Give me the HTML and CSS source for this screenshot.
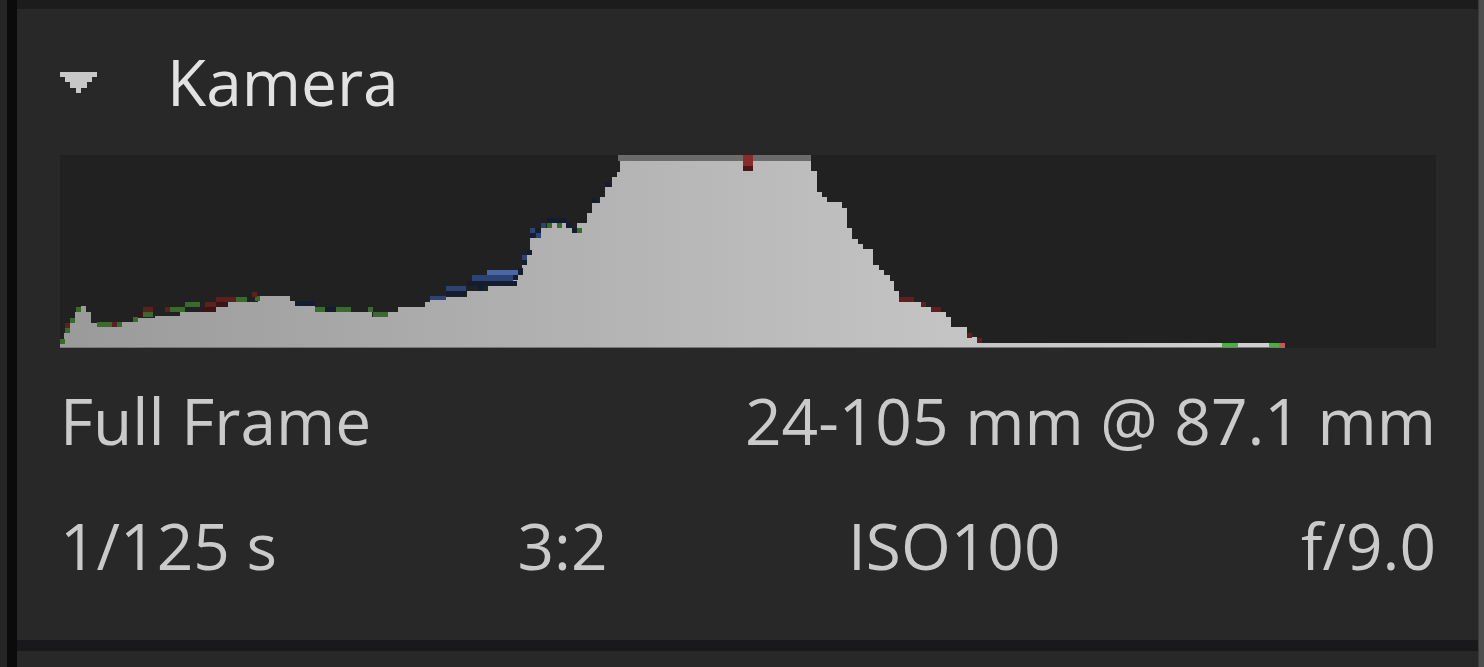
FILE: index.html
```html
<!DOCTYPE html>
<html lang="de">
<head>
	<meta charset="UTF-8">
	<title>Kamera</title>
	<link rel="stylesheet" href="styles.css">
</head>
<body>
	<div class="frame">
		<div class="edge"></div>
		<div class="rail"></div>

		<section class="panel">
			<header class="panel-head">
				<svg class="caret" width="37" height="21" viewBox="0 0 37 21">
					<polygon points="0,0 37,0 37,5 32,5 32,10 27,10 27,16 21,16 21,21 16,21 16,16 10,16 10,10 5,10 5,5 0,5" fill="#c8c8c8"/>
				</svg>
				<span class="title">Kamera</span>
			</header>

			<!-- Histogramm: Koordinaten im Maßstab des Panels -->
			<div class="histogram">
				<svg width="1376" height="193" viewBox="60 155 1376 193" shape-rendering="crispEdges">
					<defs>
						<linearGradient id="lum" gradientUnits="userSpaceOnUse" x1="60" y1="0" x2="1285" y2="0">
							<stop offset="0" stop-color="#9a9a9a"/>
							<stop offset="0.75" stop-color="#c5c5c5"/>
							<stop offset="1" stop-color="#d0d0d0"/>
						</linearGradient>
					</defs>
					<rect x="60" y="155" width="1376" height="193" fill="#212121"/>
					<rect x="618" y="155" width="193" height="6" fill="#6b6b6b"/>
					<path fill="url(#lum)" d="M60,348 V344 H64 V333 H70 V323 H75 V312 H81 V306 H86 V312 H91 V323 H97 V327 H122 V322 H137 V318 H155 V316 H180 V312 H216 V307 H228 V302 H258 V296 H290 V301 H295 V306 H315 V312 H372 V317 H388 V312 H398 V307 H425 V302 H430 V300 H446 V297 H467 V291 H488 V286 H513 V280 H518 V275 H522 V265 H527 V255 H530 V238 H536 V233 H541 V228 H547 V223 H566 V228 H572 V233 H577 V223 H587 V213 H592 V203 H600 V197 H605 V187 H612 V177 H617 V172 H620 V161 H811 V171 H817 V192 H822 V197 H827 V202 H842 V208 H847 V228 H852 V239 H858 V244 H863 V249 H873 V265 H879 V270 H884 V275 H890 V281 H894 V291 H899 V302 H921 V307 H933 V312 H946 V317 H951 V327 H967 V337 H977 V343 H1285 V348 Z"/>

					<!-- Kanalüberlagerung -->
					<g fill="#3b6a2d">
						<rect x="60" y="339" width="5" height="5"/>
						<rect x="65" y="328" width="5" height="5"/>
						<rect x="70" y="318" width="5" height="5"/>
						<rect x="76" y="307" width="5" height="5"/>
						<rect x="97" y="322" width="15" height="5"/>
						<rect x="117" y="322" width="5" height="5"/>
						<rect x="133" y="317" width="5" height="5"/>
						<rect x="143" y="312" width="10" height="5"/>
						<rect x="170" y="307" width="15" height="5"/>
						<rect x="185" y="302" width="15" height="5"/>
						<rect x="232" y="297" width="15" height="5"/>
						<rect x="255" y="296" width="5" height="5"/>
						<rect x="315" y="307" width="10" height="5"/>
						<rect x="336" y="307" width="15" height="5"/>
						<rect x="368" y="307" width="5" height="5"/>
						<rect x="373" y="312" width="15" height="5"/>
						<rect x="547" y="223" width="5" height="5"/>
						<rect x="557" y="223" width="5" height="5"/>
						<rect x="577" y="228" width="5" height="5"/>
					</g>
					<g fill="#5e1f1f">
						<rect x="65" y="323" width="5" height="5"/>
						<rect x="112" y="322" width="5" height="5"/>
						<rect x="143" y="307" width="10" height="5"/>
						<rect x="165" y="307" width="5" height="5"/>
						<rect x="205" y="302" width="15" height="5"/>
						<rect x="216" y="297" width="10" height="5"/>
						<rect x="226" y="297" width="10" height="5"/>
						<rect x="252" y="292" width="5" height="5"/>
						<rect x="899" y="297" width="15" height="5"/>
						<rect x="921" y="302" width="5" height="5"/>
						<rect x="931" y="307" width="10" height="5"/>
						<rect x="967" y="333" width="5" height="5"/>
						<rect x="977" y="338" width="5" height="5"/>
					</g>
					<g fill="#3a1515">
						<rect x="201" y="307" width="15" height="5"/>
						<rect x="216" y="302" width="10" height="5"/>
						<rect x="138" y="312" width="5" height="5"/>
					</g>
					<g fill="#141c30">
						<rect x="295" y="301" width="20" height="5"/>
						<rect x="325" y="307" width="11" height="5"/>
						<rect x="467" y="281" width="50" height="5"/>
						<rect x="446" y="291" width="20" height="5"/>
						<rect x="478" y="286" width="5" height="5"/>
						<rect x="513" y="275" width="5" height="5"/>
						<rect x="518" y="268" width="5" height="7"/>
						<rect x="522" y="260" width="5" height="5"/>
						<rect x="527" y="250" width="5" height="5"/>
						<rect x="530" y="233" width="5" height="5"/>
						<rect x="536" y="228" width="5" height="5"/>
						<rect x="547" y="218" width="20" height="5"/>
						<rect x="566" y="223" width="5" height="5"/>
						<rect x="572" y="228" width="5" height="5"/>
						<rect x="592" y="198" width="5" height="5"/>
						<rect x="605" y="182" width="5" height="5"/>
					</g>
					<g fill="#2c4376">
						<rect x="430" y="296" width="16" height="4"/>
						<rect x="446" y="286" width="20" height="5"/>
						<rect x="472" y="275" width="41" height="6"/>
						<rect x="522" y="255" width="5" height="5"/>
						<rect x="530" y="228" width="5" height="5"/>
						<rect x="541" y="223" width="5" height="5"/>
						<rect x="536" y="233" width="5" height="5"/>
					</g>
					<rect x="487" y="270" width="31" height="5" fill="#4a67a6"/>
					<rect x="743" y="155" width="10" height="11" fill="#8a2b2b"/>
					<rect x="743" y="166" width="10" height="5" fill="#4b1616"/>
					<rect x="1222" y="343" width="16" height="5" fill="#45b23d"/>
					<rect x="1269" y="343" width="10" height="5" fill="#45b23d"/>
					<rect x="1279" y="343" width="6" height="5" fill="#d45252"/>
					<rect x="60" y="347" width="1225" height="1" fill="#777777"/>
				</svg>
			</div>

			<div class="row">
				<span>Full Frame</span>
				<span>24-105 mm @ 87.1 mm</span>
			</div>
			<div class="row">
				<span>1/125 s</span>
				<span>3:2</span>
				<span>ISO100</span>
				<span>f/9.0</span>
			</div>

			<div class="panel-foot"></div>
		</section>

		<div class="scroll"></div>
	</div>
</body>
</html>
```

FILE: styles.css
```css
html, body {
	margin: 0;
	height: 100%;
	background: #282828;
	overflow: hidden;
}

.frame {
	display: flex;
	height: 667px;
	font-family: "Open Sans", "Noto Sans", sans-serif;
}

/* linker Rand */
.edge {
	width: 7px;
	background: #262626;
}
.rail {
	width: 10px;
	background: #0b0b0b;
}

.panel {
	flex: 1;
	display: flex;
	flex-direction: column;
	border-top: 9px solid #1c1c1c;
	padding: 0 42px 0 43px;
	background: #282828;
}

/* Kopfzeile */
.panel-head {
	display: flex;
	align-items: center;
	height: 146px;
	gap: 70px;
}
.caret {
	display: block;
}
.title {
	font-size: 64px;
	line-height: 1;
	color: #e2e2e2;
}

.histogram {
	margin-bottom: 10px;
}
.histogram svg {
	display: block;
}

/* Werte */
.row {
	display: flex;
	justify-content: space-between;
	height: 125px;
	align-items: center;
	font-size: 64px;
	line-height: 1;
	color: #cacaca;
}

.panel-foot {
	margin-top: auto;
	height: 11px;
	margin-bottom: 16px;
	margin-left: -43px;
	margin-right: -42px;
	background: #19191b;
}

/* rechter Rand */
.scroll {
	width: 5px;
	background: #4e4e4e;
	border-left: 1px solid #3a3a3a;
}
```
